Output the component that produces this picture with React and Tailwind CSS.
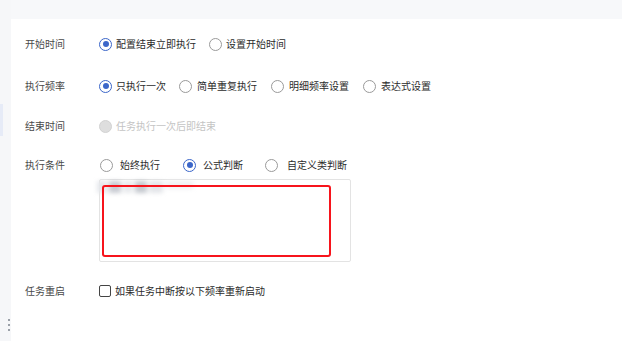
import React from 'react';

function Radio({ checked, disabled }) {
    if (disabled) {
        return <span className="w-[13px] h-[13px] rounded-full bg-[#dedede] border border-[#d2d2d2] shrink-0" />;
    }
    return checked ? (
        <span className="w-[13px] h-[13px] rounded-full border border-[#3b66c9] flex items-center justify-center shrink-0">
            <span className="w-[6px] h-[6px] rounded-full bg-[#3b66c9]" />
        </span>
    ) : (
        <span className="w-[13px] h-[13px] rounded-full border border-[#9a9a9a] shrink-0" />
    );
}

function Option({ label, checked, disabled, gap = 'gap-[4px]', className = '' }) {
    return (
        <span className={`flex items-center ${gap} ${className}`}>
            <Radio checked={checked} disabled={disabled} />
            <span className={disabled ? 'text-[#c4c4c4]' : 'text-[#2b2b2b]'}>{label}</span>
        </span>
    );
}

function Row({ label, children, className = '' }) {
    return (
        <div className={`flex items-center h-[20px] ${className}`}>
            <span className="w-[74px] text-[#4a4a4a] shrink-0">{label}</span>
            {children}
        </div>
    );
}

export default function App() {
    return (
        <div
            className="flex w-[622px] h-[341px] bg-white text-[10px] leading-none overflow-hidden"
            style={{ fontFamily: '"Noto Sans CJK SC", "Noto Sans", sans-serif' }}
        >
            {/* left rail */}
            <div className="w-[11px] bg-[#f6f7f9] flex flex-col shrink-0">
                <div className="h-[104px]" />
                <div className="w-[3px] h-[32px] bg-[#e6ebf7]" />
                <div className="flex-1" />
                <div className="flex flex-col items-end gap-[3px] pr-[1px] mb-[10px]">
                    <span className="w-[2px] h-[2px] bg-[#9aa0a8]" />
                    <span className="w-[2px] h-[2px] bg-[#9aa0a8]" />
                    <span className="w-[2px] h-[2px] bg-[#9aa0a8]" />
                </div>
            </div>

            <div className="flex-1 flex flex-col">
                <div className="h-[19px] bg-[#f7f8fa] shrink-0" />

                <div className="pl-[14px] pt-[15px] flex flex-col">
                    <Row label="开始时间">
                        <Option label="配置结束立即执行" checked />
                        <Option label="设置开始时间" className="ml-[13px]" />
                    </Row>

                    <Row label="执行频率" className="mt-[22px]">
                        <Option label="只执行一次" checked />
                        <Option label="简单重复执行" gap="gap-[5px]" className="ml-[13px]" />
                        <Option label="明细频率设置" gap="gap-[5px]" className="ml-[14px]" />
                        <Option label="表达式设置" gap="gap-[5px]" className="ml-[14px]" />
                    </Row>

                    <Row label="结束时间" className="mt-[20px]">
                        <Option label="任务执行一次后即结束" disabled />
                    </Row>

                    <Row label="执行条件" className="mt-[19px]">
                        <Option label="始终执行" gap="gap-[7px]" className="ml-[1px]" />
                        <Option label="公式判断" checked gap="gap-[7px]" className="ml-[23px]" />
                        <Option label="自定义类判断" gap="gap-[9px]" className="ml-[22px]" />
                    </Row>

                    <div className="flex mt-[4px]">
                        <div className="w-[74px] shrink-0" />
                        <div className="relative w-[252px] h-[83px] border border-[#e3e3e3] rounded-[2px] p-[5px_19px_4px_2px]">
                            <div className="absolute left-[-3px] top-[1px] flex items-start gap-[2px] blur-[2px]">
                                <span className="w-[10px] h-[12px] bg-[#e6e8ec]" />
                                <span className="w-[12px] h-[12px] bg-[#c9ccd3]" />
                                <span className="w-[10px] h-[12px] bg-[#e8eaed]" />
                                <span className="w-[12px] h-[12px] bg-[#c6cad0]" />
                                <span className="w-[14px] h-[12px] bg-[#e3e5e9]" />
                                <span className="w-[28px] h-[8px] bg-[#f0f1f3]" />
                            </div>
                            <div className="relative w-full h-full border-2 border-[#f7141c] rounded-[3px]" />
                        </div>
                    </div>

                    <div className="flex items-center h-[20px] mt-[19px]">
                        <span className="w-[74px] text-[#4a4a4a] shrink-0">任务重启</span>
                        <span className="flex items-center gap-[4px]">
                            <span className="w-[12px] h-[12px] border border-[#444] rounded-[2px] shrink-0" />
                            <span className="text-[#2b2b2b]">如果任务中断按以下频率重新启动</span>
                        </span>
                    </div>
                </div>
            </div>
        </div>
    );
}
